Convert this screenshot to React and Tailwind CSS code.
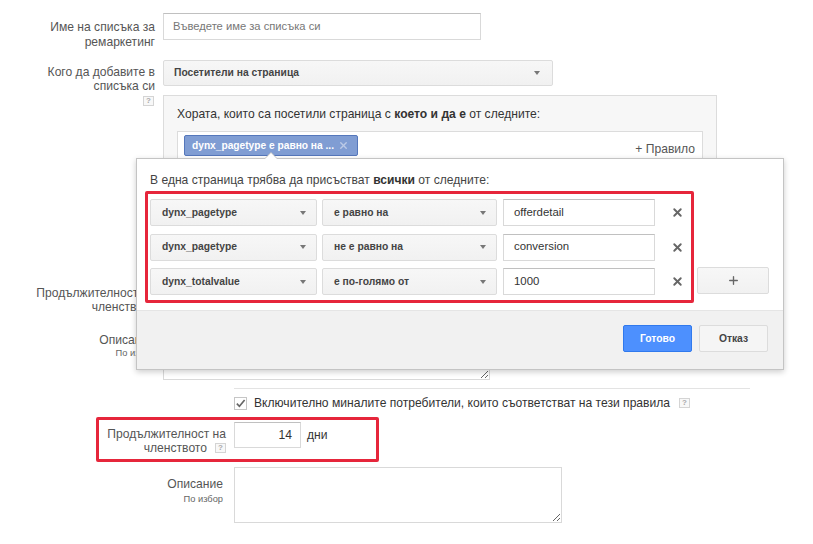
import { X, Plus } from "lucide-react";

const Help = ({ className = "" }) => (
  <span
    className={`inline-flex h-[10px] w-[11px] items-center justify-center border border-[#d4d4d4] bg-[#f8f8f8] text-[8px] font-bold leading-none text-[#aaa] ${className}`}
  >
    ?
  </span>
);

const Arrow = () => (
  <span className="h-0 w-0 border-x-[3.5px] border-t-[4px] border-x-transparent border-t-[#777]" />
);

const Select = ({ label, w }) => (
  <div
    className={`flex h-[27px] ${w} items-center justify-between whitespace-nowrap rounded-[2px] border border-[#dcdcdc] bg-linear-to-b from-[#f7f7f7] to-[#f1f1f1] pl-[11px] pr-[10px] text-[10.3px] font-bold text-[#444]`}
  >
    <span>{label}</span>
    <Arrow />
  </div>
);

const TextBox = ({ value }) => (
  <div className="flex h-[27px] w-[152px] items-center border border-[#d9d9d9] border-t-[#c0c0c0] bg-white pl-[10px] text-[11.4px] text-[#333]">
    {value}
  </div>
);

const rules = [
  { key: "dynx_pagetype", op: "е равно на", value: "offerdetail" },
  { key: "dynx_pagetype", op: "не е равно на", value: "conversion" },
  { key: "dynx_totalvalue", op: "е по-голямо от", value: "1000" },
];

const RulePopup = () => (
  <div className="absolute left-[136px] top-[158px] flex h-[212px] w-[648px] flex-col border border-[#c4c4c4] bg-white shadow-[0_2px_6px_rgba(0,0,0,0.2)]">
    {/* стрелка към чипа */}
    <span className="absolute -top-[7px] left-[127px] h-0 w-0 border-x-[7px] border-b-[7px] border-x-transparent border-b-[#c4c4c4]" />
    <span className="absolute -top-[6px] left-[128px] h-0 w-0 border-x-[6px] border-b-[6px] border-x-transparent border-b-white" />

    <div className="pl-[8px] pt-[14px] pb-[7px]">
      <p className="pl-[5px] text-[12.1px] leading-[15px] text-[#444]">
        В една страница трябва да присъстват <b className="text-[#333]">всички</b> от следните:
      </p>
      <div className="mt-[3px] flex items-end">
        <div className="flex w-[549px] flex-col gap-[7.5px] rounded-[2px] border-[3px] border-[#e6263b] pb-[5px] pl-[2px] pt-[5px]">
          {rules.map((r, i) => (
            <div key={i} className="flex items-center">
              <Select label={r.key} w="w-[167px]" />
              <div className="ml-[5px]">
                <Select label={r.op} w="w-[175px]" />
              </div>
              <div className="ml-[6px]">
                <TextBox value={r.value} />
              </div>
              <X className="ml-[16px] h-[13px] w-[13px] text-[#666]" strokeWidth={3.5} />
            </div>
          ))}
        </div>
        <div className="mb-[9px] ml-[3px] flex h-[27px] w-[72px] items-center justify-center rounded-[2px] border border-[#dcdcdc] bg-linear-to-b from-[#f7f7f7] to-[#f1f1f1]">
          <Plus className="h-[13px] w-[13px] text-[#666]" strokeWidth={2.5} />
        </div>
      </div>
    </div>

    <div className="flex flex-1 items-start justify-end gap-[7px] border-t border-[#e5e5e5] bg-[#f1f1f1] pr-[15px] pt-[14px]">
      <button className="h-[27px] w-[69px] rounded-[2px] border border-[#3079ed] bg-[#4d90fe] text-[10.3px] font-bold text-white">
        Готово
      </button>
      <button className="h-[27px] w-[69px] rounded-[2px] border border-[#dcdcdc] bg-[#f5f5f5] text-[10.3px] font-bold text-[#444]">
        Отказ
      </button>
    </div>
  </div>
);

export default function App() {
  return (
    <div className="relative h-[544px] w-[813px] overflow-hidden bg-white pt-[13px] font-['Liberation_Sans',Arial,sans-serif] text-[12.1px] text-[#555]">
      {/* име на списъка */}
      <div className="flex h-[47px]">
        <div className="w-[155px] pt-[7px] text-right leading-[15px]">
          Име на списъка за
          <br />
          ремаркетинг
        </div>
        <div className="ml-[8px] flex h-[27px] w-[318px] items-center border border-[#d9d9d9] border-t-[#c0c0c0] bg-white pl-[9px] text-[11.2px] text-[#777]">
          Въведете име за списъка си
        </div>
      </div>

      {/* кого да добавите */}
      <div className="flex">
        <div className="flex w-[155px] flex-col items-end pt-[5px] text-right leading-[14px]">
          <span>Кого да добавите в</span>
          <span>списъка си</span>
          <Help className="mr-[1px] mt-[3px]" />
        </div>
        <div className="ml-[8px]">
          <div className="flex h-[26px] w-[390px] items-center justify-between rounded-[2px] border border-[#dcdcdc] bg-linear-to-b from-[#f7f7f7] to-[#f1f1f1] pl-[10px] pr-[12px] text-[10.3px] font-bold text-[#444]">
            <span>Посетители на страница</span>
            <Arrow />
          </div>
          <div className="mt-[9px] h-[180px] w-[554px] border border-[#dcdcdc] bg-[#f7f7f7] px-[13px] pt-[11px]">
            <p className="leading-[15px] text-[#333]">
              Хората, които са посетили страница с <b>което и да е</b> от следните:
            </p>
            <div className="mt-[9px] flex h-[60px] items-start justify-between border border-[#dcdcdc] bg-white pl-[6px] pr-[7px] pt-[3px]">
              <div className="flex h-[21px] w-[174px] items-center whitespace-nowrap rounded-[2px] border border-[#5577bb] bg-[#809dd3] pl-[7px] pr-[8px] text-[10.2px] font-bold text-white">
                <span>dynx_pagetype е равно на ...</span>
                <X className="ml-auto h-[11px] w-[11px] text-[#bccae6]" strokeWidth={3} />
              </div>
              <span className="mt-[7px] leading-[15px]">+ Правило</span>
            </div>
          </div>
        </div>
      </div>

      {/* продължителност (под изскачащия прозорец) */}
      <div className="mt-[11px] flex h-[28px]">
        <div className="flex w-[155px] flex-col items-end whitespace-nowrap leading-[14px]">
          <span>Продължителност на</span>
          <span>членството</span>
        </div>
        <div className="ml-[8px] h-[26px] w-[64px] border border-[#d9d9d9] bg-white" />
      </div>

      {/* описание (под изскачащия прозорец) */}
      <div className="mt-[16px] flex">
        <div className="w-[155px] pt-[3px] text-right">
          <div className="leading-[14px]">Описание</div>
          <div className="text-[9.3px] leading-[12px] text-[#666]">По избор</div>
        </div>
        <textarea
          readOnly
          className="ml-[8px] h-[50px] w-[327px] border border-[#d9d9d9] bg-white"
        />
      </div>

      <div className="ml-[234px] mt-[8px] w-[516px] border-t border-[#e3e3e3]" />

      {/* отметка */}
      <div className="ml-[234px] mt-[7px] flex h-[14px] items-center text-[#333]">
        <span className="flex h-[13px] w-[13px] items-center justify-center border border-[#c6c6c6] bg-white">
          <svg viewBox="0 0 12 12" className="h-[11px] w-[11px]">
            <path d="M2 6.2 L4.8 9 L10.5 2.2" fill="none" stroke="#666" strokeWidth="1.8" />
          </svg>
        </span>
        <span className="ml-[7px] leading-[14px]">
          Включително миналите потребители, които съответстват на тези правила
        </span>
        <Help className="ml-[9px]" />
      </div>

      {/* продължителност на членството */}
      <div className="ml-[96px] mt-[7px] flex h-[45px] w-[283px] items-start rounded-[2px] border-[3px] border-[#e6263b]">
        <div className="flex w-[127px] flex-col items-end whitespace-nowrap pt-[7px] leading-[14px]">
          <span>Продължителност на</span>
          <span className="flex items-center">
            членството
            <Help className="ml-[8px]" />
          </span>
        </div>
        <div className="ml-[8px] mt-[2px] flex h-[26px] w-[67px] items-center justify-end border border-[#d9d9d9] border-t-[#c0c0c0] bg-white pr-[8px] text-[#333]">
          14
        </div>
        <span className="ml-[6px] mt-[8px] leading-[14px] text-[#333]">дни</span>
      </div>

      {/* описание */}
      <div className="mt-[5px] flex">
        <div className="w-[226px] pr-[3px] pt-[10px] text-right">
          <div className="leading-[14px]">Описание</div>
          <div className="mt-[2px] text-[9.3px] leading-[12px] text-[#666]">По избор</div>
        </div>
        <textarea
          readOnly
          className="ml-[8px] h-[56px] w-[328px] border border-[#d9d9d9] bg-white"
        />
      </div>

      <RulePopup />
    </div>
  );
}
